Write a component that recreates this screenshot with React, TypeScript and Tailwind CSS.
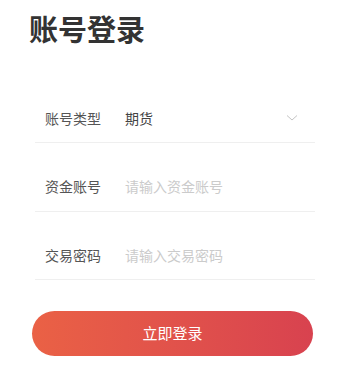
export default function App() {
  const font = { fontFamily: '"Noto Sans CJK SC", "Noto Sans", sans-serif' };
  return (
    <div
      className="h-[381px] w-[343px] overflow-hidden bg-white font-['Noto_Sans_CJK_SC',sans-serif]"
      style={font}
    >
      <h1 className="pl-[29px] pt-[9px] text-[29px] font-bold leading-[38px] text-[#333]">
        账号登录
      </h1>

      <div className="mx-[35px] mt-[28px] w-[280px]">
        <div className="flex h-[68px] items-start border-b border-[#efefef] pl-[10px] pt-[35px] text-[14px] leading-[16px]">
          <span className="w-[80px] text-[#555]">账号类型</span>
          <span className="flex-1 text-[#444]">期货</span>
          <svg
            width="12"
            height="8"
            viewBox="0 0 12 8"
            className="mr-[17px] mt-[4px]"
          >
            <polyline
              points="1,1.5 6,6 11,1.5"
              fill="none"
              stroke="#c4c4c4"
              strokeWidth="1"
            />
          </svg>
        </div>
        <div className="flex h-[69px] items-start border-b border-[#efefef] pl-[10px] pt-[35px] text-[14px] leading-[16px]">
          <span className="w-[80px] text-[#555]">资金账号</span>
          <input
            className="h-[16px] min-w-0 flex-1 bg-transparent p-0 text-[14px] leading-[16px] text-[#333] outline-none placeholder:text-[#cbcbcb]"
            placeholder="请输入资金账号"
          />
        </div>
        <div className="flex h-[68px] items-start border-b border-[#efefef] pl-[10px] pt-[35px] text-[14px] leading-[16px]">
          <span className="w-[80px] text-[#555]">交易密码</span>
          <input
            type="password"
            className="h-[16px] min-w-0 flex-1 bg-transparent p-0 text-[14px] leading-[16px] text-[#333] outline-none placeholder:text-[#cbcbcb]"
            placeholder="请输入交易密码"
          />
        </div>
      </div>

      <div className="mt-[31px] px-[32px]">
        <button className="h-[45px] w-[281px] rounded-full bg-gradient-to-r from-[#ea6145] to-[#d8424f] text-[15px] text-white">
          立即登录
        </button>
      </div>
    </div>
  );
}
